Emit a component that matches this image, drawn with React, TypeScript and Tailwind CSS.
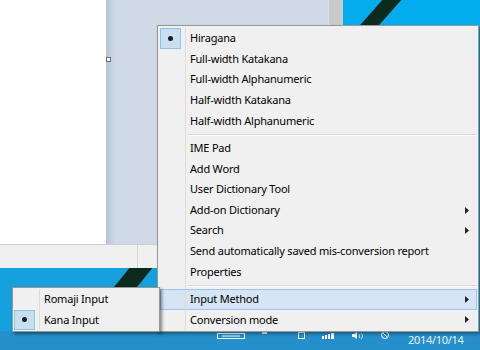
import React from 'react';

type Entry = { label: string; checked?: boolean; sub?: boolean; active?: boolean } | 'sep';

const imeMenu: Entry[] = [
  { label: 'Hiragana', checked: true },
  { label: 'Full-width Katakana' },
  { label: 'Full-width Alphanumeric' },
  { label: 'Half-width Katakana' },
  { label: 'Half-width Alphanumeric' },
  'sep',
  { label: 'IME Pad' },
  { label: 'Add Word' },
  { label: 'User Dictionary Tool' },
  { label: 'Add-on Dictionary', sub: true },
  { label: 'Search', sub: true },
  { label: 'Send automatically saved mis-conversion report' },
  { label: 'Properties' },
  'sep',
  { label: 'Input Method', sub: true, active: true },
  { label: 'Conversion mode', sub: true },
];

const inputMethodMenu: Entry[] = [{ label: 'Romaji Input' }, { label: 'Kana Input', checked: true }];

function Arrow() {
  return (
    <svg width="4" height="7" viewBox="0 0 4 7" className="shrink-0">
      <path d="M0 0L4 3.5L0 7Z" fill="#222" />
    </svg>
  );
}

function MenuList({ entries }: { entries: Entry[] }) {
  return (
    <>
      {entries.map((e, i) =>
        e === 'sep' ? (
          <div key={i} className="flex h-[6.5px]">
            <div className="w-[26px] shrink-0 border-r border-[#dcdcdc]" />
            <div className="flex flex-1 flex-col justify-center pl-[2px]">
              <div className="h-px bg-[#d7d7d7]" />
              <div className="h-px bg-white" />
            </div>
          </div>
        ) : (
          <div
            key={i}
            className={`flex h-[20.67px] items-stretch ${
              e.active ? 'bg-[#d5e5f5] ring-1 ring-inset ring-[#9fc4ec]' : ''
            }`}
          >
            <div className="flex w-[26px] shrink-0 border-r border-[#dcdcdc]">
              {e.checked && (
                <div className="flex w-[21px] items-center justify-center border border-[#90c2e6] bg-[#c6e0f1]">
                  <span className="size-[5px] rounded-full bg-[#1c1c1c]" />
                </div>
              )}
            </div>
            <div className="flex flex-1 items-center pl-[4px] pr-[8px]">
              <span className="flex-1 whitespace-nowrap">{e.label}</span>
              {e.sub && <Arrow />}
            </div>
          </div>
        )
      )}
    </>
  );
}

function Wallpaper() {
  return (
    <svg className="absolute inset-0" width="480" height="350" viewBox="0 0 480 350">
      <rect width="480" height="350" fill="#17a0de" />
      <rect x="330" width="150" height="60" fill="#03aced" />
      <polygon points="384,-2 403,-2 366,40 347,40" fill="#0c2a1e" />
      <polygon points="131,266 154,266 86,350 63,350" fill="#0c2a1e" />
    </svg>
  );
}

function TrayIcons() {
  return (
    <svg width="200" height="18" viewBox="0 0 200 18" className="shrink-0">
      <rect x="17.5" y="1.5" width="27" height="5" fill="none" stroke="#fff" strokeWidth="1" />
      <line x1="22" y1="4" x2="40" y2="4" stroke="#fff" strokeWidth="1" />
      <rect x="62" y="0" width="5" height="2" fill="#e8eef3" />
      <rect x="98.5" y="0.5" width="6" height="6" fill="none" stroke="#fff" strokeWidth="1" />
      <rect x="122" y="4" width="2" height="3" fill="#fff" />
      <rect x="125" y="3" width="2" height="4" fill="#fff" />
      <rect x="128" y="2" width="2" height="5" fill="#fff" />
      <rect x="131" y="1" width="3" height="6" fill="#fff" />
      <path d="M152 2h2l3-2v7l-3-2h-2z" fill="#fff" />
      <path d="M159 2c1 1 1 3 0 4M161 1c2 2 2 4 0 6" stroke="#fff" fill="none" strokeWidth="0.8" />
      <circle cx="185" cy="3" r="3.5" fill="none" stroke="#fff" strokeWidth="1" />
      <path d="M183 1l4 4" stroke="#fff" strokeWidth="1" />
    </svg>
  );
}

export default function App() {
  return (
    <div className="relative h-[350px] w-[480px] overflow-hidden font-['Noto_Sans',sans-serif] text-[11px] tracking-[-0.2px] text-black">
      <Wallpaper />

      <div className="relative flex h-full flex-col">
        {/* app window */}
        <div className="flex h-[268px] w-[343px] flex-col">
          <div className="flex flex-1">
            <div className="w-[106px] bg-white" />
            <div className="flex flex-1 bg-[#d0dae7]">
              <div className="w-[10px] bg-gradient-to-r from-[#b6c4d5] to-[#d0dae7]" />
            </div>
            <div className="w-[15px] border-l border-[#e0e0e0] bg-[#cacaca]" />
          </div>
          <div className="flex h-[24px] border-t border-[#cfcfcf] bg-[#f0f0f0]">
            <div className="w-[138px] border-r border-[#d5d5d5]" />
          </div>
        </div>

        <div className="flex-1" />

        {/* taskbar */}
        <div className="flex h-[19px] items-start bg-[#248fca] pt-[1px]">
          <div className="w-[200px]" />
          <TrayIcons />
          <span className="ml-[8px] text-[11px] leading-[16px] tracking-[-0.3px] text-white/90">2014/10/14</span>
        </div>
      </div>

      {/* selection handle */}
      <div className="absolute left-[106px] top-[57px] size-[5px] border border-[#6d6d6d] bg-white" />

      {/* IME context menu */}
      <div className="absolute left-[157px] top-[25px] w-[322px] border border-[#979797] bg-[#f0f0f0] pb-[1px] pl-[2px] pr-[1px] pt-[2px] shadow-[2px_2px_3px_rgba(0,0,0,0.35)]">
        <MenuList entries={imeMenu} />
      </div>

      {/* Input Method submenu */}
      <div className="absolute left-[12px] top-[287px] w-[148px] border border-[#979797] bg-[#f0f0f0] pb-[1px] pl-[1px] pr-[2px] pt-[1px] shadow-[2px_2px_3px_rgba(0,0,0,0.45)]">
        <MenuList entries={inputMethodMenu} />
      </div>
    </div>
  );
}
